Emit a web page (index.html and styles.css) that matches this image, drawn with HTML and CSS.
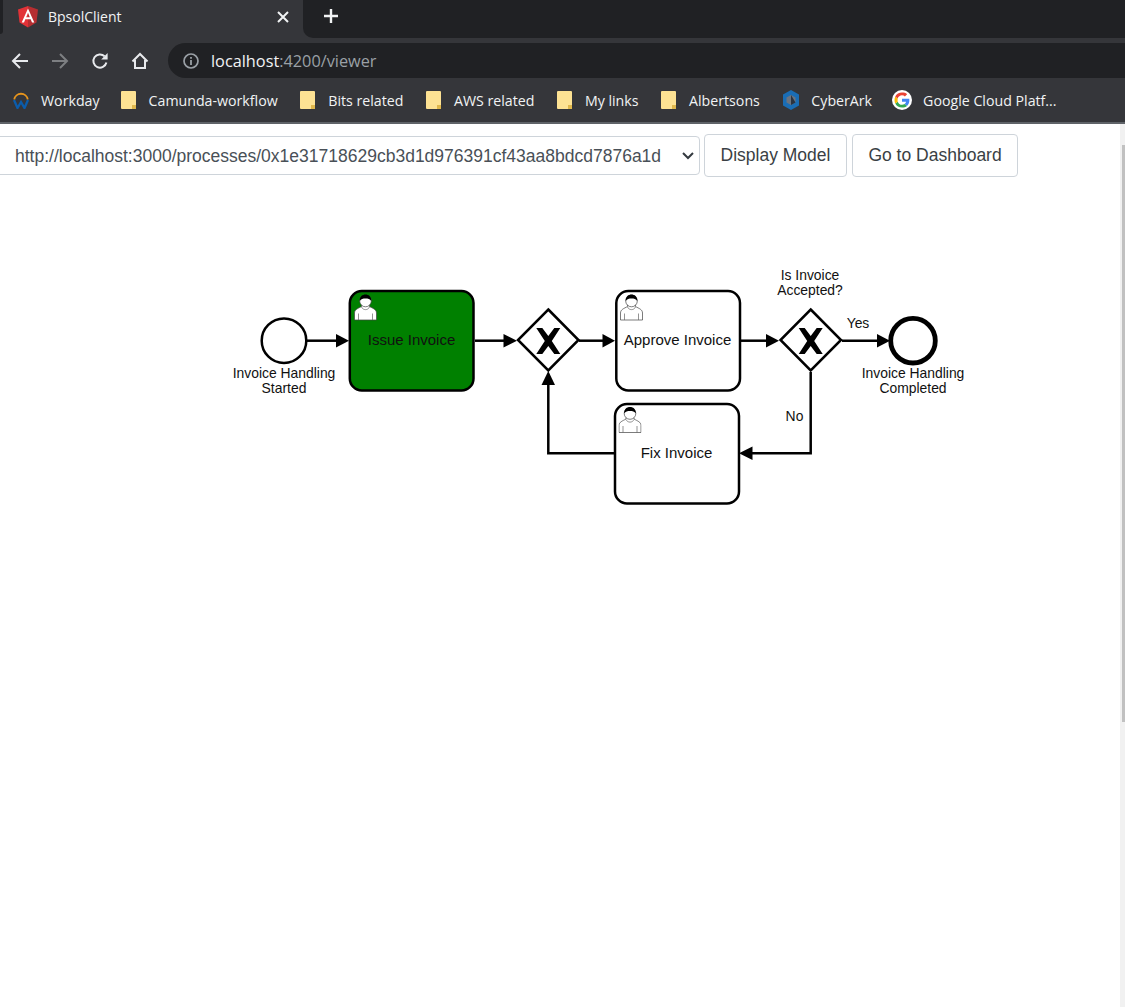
FILE: index.html
```html
<!DOCTYPE html>
<html lang="en">
<head>
    <meta charset="UTF-8">
    <meta name="viewport" content="width=device-width, initial-scale=1.0">
    <title>BpsolClient</title>
    <link rel="stylesheet" href="styles.css">
</head>
<body>
    <!-- Browser chrome -->
    <header class="chrome">
        <div class="tabstrip">
            <div class="strip-edge"></div>
            <div class="tab">
                <svg class="tab-icon" viewBox="0 0 20 22" width="20" height="22">
                    <path fill="#e23237" d="M10 0 L0 3.6 1.5 16.6 10 21.4z"/>
                    <path fill="#b52e31" d="M10 0 L20 3.6 18.5 16.6 10 21.4z"/>
                    <path fill="#fff" d="M10 2.6 L3.7 16.4 H6 L7.3 13.2 H12.7 L14 16.4 H16.3z M8.2 11.2 L10 6.8 11.8 11.2z"/>
                </svg>
                <span class="tab-title">BpsolClient</span>
                <svg class="tab-close" viewBox="0 0 12 12" width="12" height="12">
                    <path d="M1 1 L11 11 M11 1 L1 11" stroke="#f1f3f4" stroke-width="2"/>
                </svg>
            </div>
            <div class="strip-rest">
                <svg class="new-tab" viewBox="0 0 16 16" width="16" height="16">
                    <path d="M8 1 V15 M1 8 H15" stroke="#f1f3f4" stroke-width="2.4"/>
                </svg>
            </div>
        </div>
        <div class="toolbar">
            <svg class="nav-icon" viewBox="0 0 18 18" width="18" height="18">
                <path d="M17 9 H2 M9 2 L2 9 L9 16" fill="none" stroke="#e8eaed" stroke-width="2"/>
            </svg>
            <svg class="nav-icon" viewBox="0 0 18 18" width="18" height="18">
                <path d="M1 9 H16 M9 2 L16 9 L9 16" fill="none" stroke="#7d7f82" stroke-width="2"/>
            </svg>
            <svg class="nav-icon" viewBox="0 0 18 18" width="18" height="18">
                <path d="M15.4 10.5 A6.6 6.6 0 1 1 13.6 4.3" fill="none" stroke="#e8eaed" stroke-width="2"/>
                <path d="M16.6 1 V7.4 H10.2z" fill="#e8eaed"/>
            </svg>
            <svg class="nav-icon" viewBox="0 0 18 18" width="18" height="18">
                <path d="M1.5 9.5 L9 2 L16.5 9.5 M4 8 V16 H14 V8" fill="none" stroke="#e8eaed" stroke-width="2"/>
            </svg>
            <div class="omnibox">
                <svg class="info-icon" viewBox="0 0 16 16" width="16" height="16">
                    <circle cx="8" cy="8" r="7" fill="none" stroke="#9aa0a6" stroke-width="1.7"/>
                    <path d="M7.1 7 H8.9 V12 H7.1z M7.1 4 H8.9 V5.8 H7.1z" fill="#9aa0a6"/>
                </svg>
                <span class="url-host">localhost</span><span class="url-rest">:4200/viewer</span>
            </div>
        </div>
        <nav class="bookmarks">
            <a class="bookmark">
                <svg viewBox="0 0 18 18" width="18" height="18">
                    <path d="M2.2 8.5 A6.9 6.9 0 0 1 15.8 8.5" fill="none" stroke="#e8951c" stroke-width="1.8"/>
                    <path d="M2 9 L5.5 17 L9 11 L12.5 17 L16 9" fill="none" stroke="#0b5cab" stroke-width="2.3"/>
                </svg>
                Workday
            </a>
            <a class="bookmark"><span class="folder"></span>Camunda-workflow</a>
            <a class="bookmark"><span class="folder"></span>Bits related</a>
            <a class="bookmark"><span class="folder"></span>AWS related</a>
            <a class="bookmark"><span class="folder"></span>My links</a>
            <a class="bookmark"><span class="folder"></span>Albertsons</a>
            <a class="bookmark bookmark-tight">
                <svg viewBox="0 0 18 20" width="18" height="20">
                    <path d="M9 0 L17 4.5 V15.5 L9 20 L1 15.5 V4.5z" fill="#1a6db5"/>
                    <path d="M9 5 L13.5 7.5 V12.5 L9 15 L4.5 12.5 V7.5z" fill="#6b7480"/>
                    <path d="M9 5 L13.5 12.5 L9 15z" fill="#2c3440"/>
                </svg>
                CyberArk
            </a>
            <a class="bookmark">
                <svg viewBox="0 0 20 20" width="20" height="20">
                    <circle cx="10" cy="10" r="10" fill="#fff"/>
                    <g transform="translate(10 10) scale(1.25) translate(-10 -10)">
                        <path d="M15.9 10.2 C15.9 9.7 15.85 9.3 15.8 8.9 H10 V11.3 H13.3 C13.15 12.1 12.7 12.75 12 13.2 L14 14.7 C15.2 13.6 15.9 12.05 15.9 10.2z" fill="#4285f4"/>
                        <path d="M10 16 C11.65 16 13 15.45 14 14.7 L12 13.2 C11.45 13.55 10.8 13.8 10 13.8 C8.4 13.8 7.1 12.75 6.6 11.3 L4.6 12.85 C5.6 14.8 7.6 16 10 16z" fill="#34a853"/>
                        <path d="M6.6 11.3 C6.35 10.5 6.35 9.5 6.6 8.7 L4.6 7.15 C3.8 8.8 3.8 11.2 4.6 12.85z" fill="#fbbc05"/>
                        <path d="M10 6.2 C10.9 6.2 11.7 6.5 12.3 7.1 L14.1 5.3 C13 4.3 11.65 4 10 4 C7.6 4 5.6 5.2 4.6 7.15 L6.6 8.7 C7.1 7.25 8.4 6.2 10 6.2z" fill="#ea4335"/>
                    </g>
                </svg>
                Google Cloud Platf...
            </a>
        </nav>
    </header>

    <div class="viewport">
        <main class="page">
            <div class="controls">
                <div class="select-wrap">
                    <select class="model-select">
                        <option>http://localhost:3000/processes/0x1e31718629cb3d1d976391cf43aa8bdcd7876a1d</option>
                    </select>
                    <svg class="select-arrow" viewBox="0 0 12 8" width="12" height="8">
                        <path d="M1 1 L6 6 L11 1" fill="none" stroke="#343a40" stroke-width="2"/>
                    </svg>
                </div>
                <button class="btn" type="button">Display Model</button>
                <button class="btn" type="button">Go to Dashboard</button>
            </div>

            <!-- BPMN canvas, coordinates are the page's own -->
            <svg class="canvas" viewBox="0 177 1120 830" width="1120" height="830">
                <defs>
                    <symbol id="user" viewBox="0 0 23 27" width="23" height="27">
                        <path class="user-body" d="M0.5 26 V19 C0.5 15.5 4 14.5 7.5 12.5 V11 H15.5 V12.5 C19 14.5 22.5 15.5 22.5 19 V26z"/>
                        <path class="user-line" d="M7.5 13 C9 16.5 14 16.5 15.5 13 M4.5 19.5 V26 M18.5 19.5 V26"/>
                        <circle class="user-body" cx="11.5" cy="7" r="5.8"/>
                        <path class="user-hair" d="M5.7 7 C5.5 2.5 8.5 0.5 11.5 0.5 C14.5 0.5 17.5 2.5 17.3 7 C16 5 14 4.5 11.5 4.5 C9 4.5 7 5 5.7 7z"/>
                    </symbol>
                    <polygon id="cross" points="-12,-13 -6,-13 0,-5 6,-13 12,-13 3.5,0 12,13 6,13 0,5 -6,13 -12,13 -3.5,0"/>
                </defs>

                <!-- flows -->
                <path class="flow" d="M307 340.7 H338"/>
                <path class="flow" d="M475 340.7 H505"/>
                <path class="flow" d="M579 340.7 H604"/>
                <path class="flow" d="M741 340.7 H768"/>
                <path class="flow" d="M842 340.7 H879"/>
                <path class="flow" d="M810.7 372 V453.2 H751"/>
                <path class="flow" d="M614 453.2 H548.3 V383"/>
                <polygon class="head" points="349,340.7 336,334 336,347.4"/>
                <polygon class="head" points="517,340.7 503.5,334 503.5,347.4"/>
                <polygon class="head" points="615,340.7 602.5,334 602.5,347.4"/>
                <polygon class="head" points="779,340.7 766,334 766,347.4"/>
                <polygon class="head" points="890,340.7 877,334 877,347.4"/>
                <polygon class="head" points="739,453.2 752.5,446.5 752.5,459.9"/>
                <polygon class="head" points="548.3,371 541.5,385 555,385"/>

                <!-- events -->
                <circle class="shape" cx="284" cy="340.7" r="22.3"/>
                <circle class="shape end" cx="913" cy="340.7" r="22.3"/>

                <!-- tasks -->
                <rect class="shape task-active" x="349.8" y="291" width="123.7" height="99.5" rx="12"/>
                <rect class="shape" x="616.3" y="291" width="123.7" height="99.5" rx="12"/>
                <rect class="shape" x="615" y="404" width="124" height="99.5" rx="12"/>
                <use href="#user" x="354" y="294"/>
                <use href="#user" x="620" y="294"/>
                <use href="#user" x="618.5" y="406.5"/>

                <!-- gateways -->
                <polygon class="shape" points="548.3,309.5 578.5,340 548.3,370.5 518,340"/>
                <polygon class="shape" points="810.7,309.5 841,340 810.7,370.5 780.5,340"/>
                <use href="#cross" x="548.3" y="341"/>
                <use href="#cross" x="810.7" y="341"/>

                <!-- labels -->
                <text class="label task-label" x="411.5" y="345">Issue Invoice</text>
                <text class="label task-label" x="677.5" y="345">Approve Invoice</text>
                <text class="label task-label" x="676.5" y="458">Fix Invoice</text>
                <text class="label" x="284" y="378">Invoice Handling</text>
                <text class="label" x="284" y="393">Started</text>
                <text class="label" x="913" y="378">Invoice Handling</text>
                <text class="label" x="913" y="393">Completed</text>
                <text class="label" x="810" y="280">Is Invoice</text>
                <text class="label" x="810" y="295">Accepted?</text>
                <text class="label" x="858" y="328">Yes</text>
                <text class="label" x="794.5" y="421">No</text>
            </svg>
        </main>
        <div class="scrollbar"><div class="scrollbar-thumb"></div></div>
    </div>
</body>
</html>
```
FILE: styles.css
```css
html, body {
    height: 100%;
}
body {
    margin: 0;
    display: flex;
    flex-direction: column;
    overflow: hidden;
    background-color: white;
    font-family: "Liberation Sans", Arial, sans-serif;
}

/* browser chrome */
.chrome {
    flex: none;
    background-color: #35363a;
    color: #e8eaed;
    font-family: "Open Sans", "Noto Sans", sans-serif;
}
.tabstrip {
    display: flex;
    height: 38px;
}
.strip-edge {
    flex: none;
    width: 3px;
    height: 34px;
    background-color: #202124;
    border-radius: 0 0 8px 0;
}
.tab {
    display: flex;
    align-items: center;
    box-sizing: border-box;
    width: 300px;
    height: 33px;
    padding: 0 14px 0 15px;
}
.tab-icon {
    flex: none;
    margin-right: 10px;
}
.tab-title {
    flex: 1;
    font-size: 14px;
    color: #f1f3f4;
}
.strip-rest {
    flex: 1;
    display: flex;
    align-items: flex-start;
    padding: 8px 0 0 20px;
    background-color: #202124;
    border-radius: 0 0 0 10px;
}
.toolbar {
    display: flex;
    align-items: center;
    height: 40px;
    padding: 5px 0 0 11px;
    box-sizing: border-box;
}
.nav-icon {
    flex: none;
    margin-right: 22px;
}
.toolbar .nav-icon:nth-child(4) {
    margin-right: 19px;
}
.omnibox {
    flex: 1;
    display: flex;
    align-items: center;
    height: 35px;
    padding-left: 15px;
    background-color: #202124;
    border-radius: 18px 0 0 18px;
    font-size: 16.3px;
}
.info-icon {
    margin-right: 12px;
}
.url-host {
    color: #f1f3f4;
}
.url-rest {
    color: #9aa0a6;
}
.bookmarks {
    display: flex;
    align-items: center;
    height: 44px;
    padding-left: 12px;
    border-bottom: 2px solid #5f6368;
    font-size: 14.2px;
    color: #f1f3f4;
}
.bookmark {
    display: flex;
    align-items: center;
    gap: 11px;
    margin-right: 22.5px;
    white-space: nowrap;
}
.bookmark:first-child {
    margin-right: 21px;
}
.bookmark-tight {
    margin-right: 20px;
}
.folder {
    position: relative;
    width: 15px;
    height: 18px;
    margin-right: 2px;
    background-color: #fde293;
    border-radius: 1px;
}
.folder::after {
    content: "";
    position: absolute;
    right: 0;
    bottom: 0;
    width: 4px;
    height: 4px;
    background-color: #e0b84c;
}

/* page */
.viewport {
    flex: 1;
    display: flex;
    min-height: 0;
}
.page {
    flex: 1;
    min-width: 0;
    overflow: hidden;
}
.scrollbar {
    flex: none;
    width: 5px;
    background-color: #f1f1f1;
}
.scrollbar-thumb {
    height: 577px;
    margin: 21px 0 0 2px;
    background-color: #c1c1c1;
}
.controls {
    display: flex;
    align-items: center;
    gap: 4px;
    padding-top: 10px;
    height: 43px;
}
.select-wrap {
    position: relative;
    flex: none;
    margin-left: -10px;
}
.model-select {
    display: block;
    width: 710px;
    height: 39px;
    padding: 0 30px 0 24px;
    appearance: none;
    font-family: inherit;
    font-size: 17.5px;
    color: #495057;
    background-color: white;
    border: 1px solid #ced4da;
    border-radius: 4px;
}
.select-arrow {
    position: absolute;
    top: 16px;
    right: 6px;
    pointer-events: none;
}
.btn {
    flex: none;
    height: 43px;
    padding: 0 15.5px;
    font-family: inherit;
    font-size: 17.5px;
    color: #3a3f44;
    background-color: white;
    border: 1px solid #ced4da;
    border-radius: 4px;
}
.btn + .btn {
    margin-left: 1px;
}

/* BPMN diagram */
.canvas {
    display: block;
}
.shape {
    fill: white;
    stroke: black;
    stroke-width: 2.5;
}
.end {
    stroke-width: 4.8;
}
.task-active {
    fill: #008000;
}
.flow {
    fill: none;
    stroke: black;
    stroke-width: 2.5;
}
.head {
    fill: black;
}
.label {
    font-size: 13.9px;
    text-anchor: middle;
    fill: #111;
}
.task-label {
    font-size: 15px;
}
.user-body {
    fill: white;
    stroke: #444;
    stroke-width: 0.7;
}
.user-line {
    fill: none;
    stroke: #666;
    stroke-width: 0.7;
}
.user-hair {
    fill: black;
}
```
